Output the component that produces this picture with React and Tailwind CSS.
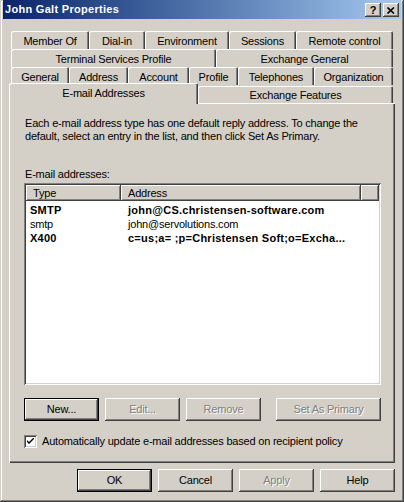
import React from "react";

const raised =
  "shadow-[inset_-1px_-1px_#404040,inset_1px_1px_#ffffff,inset_-2px_-2px_#808080,inset_2px_2px_#d4d0c8]";
const tabEdge =
  "shadow-[inset_1px_1px_#ffffff,inset_-1px_0_#404040,inset_-2px_0_#808080] rounded-t-[2px]";

function Tab({ w, label, className = "" }) {
  return (
    <div
      className={`h-[18px] flex items-center justify-center bg-[#d4d0c8] ${tabEdge} ${className}`}
      style={{ width: w }}
    >
      <span className="leading-none pt-[2px]">{label}</span>
    </div>
  );
}

function Button({ label, w = 75, disabled, isDefault }) {
  return (
    <div
      className={`h-[23px] flex items-center justify-center bg-[#d4d0c8] ${
        isDefault ? "border border-black" : ""
      }`}
      style={{ width: w }}
    >
      <div className={`w-full h-full flex items-center justify-center ${raised}`}>
        <span
          className={
            disabled ? "text-[#808080] [text-shadow:1px_1px_0_#ffffff]" : "text-black"
          }
        >
          {label}
        </span>
      </div>
    </div>
  );
}

export default function App() {
  const rows = [
    { type: "SMTP", addr: "john@CS.christensen-software.com", bold: true },
    { type: "smtp", addr: "john@servolutions.com", bold: false },
    { type: "X400", addr: "c=us;a= ;p=Christensen Soft;o=Excha...", bold: true },
  ];

  return (
    <div className="w-[404px] h-[502px] bg-[#d4d0c8] text-[11px] tracking-[-0.2px] text-black font-['Liberation_Sans',Arial,sans-serif] shadow-[inset_-1px_-1px_#404040,inset_1px_1px_#d4d0c8,inset_-2px_-2px_#808080,inset_2px_2px_#ffffff] overflow-hidden flex flex-col">
      {/* title bar */}
      <div className="mx-[3px] h-[19px] bg-gradient-to-r from-[#0a246a] to-[#a6caf0] flex items-center justify-between pl-[2px] pr-[2px]">
        <span className="text-white font-bold text-[11px] tracking-[0.3px] leading-none">John Galt Properties</span>
        <div className="flex gap-[2px] pt-[1px]">
          <div className={`w-[16px] h-[14px] bg-[#d4d0c8] flex items-center justify-center ${raised}`}>
            <span className="font-bold text-[11px] leading-none">?</span>
          </div>
          <div className={`w-[16px] h-[14px] bg-[#d4d0c8] flex items-center justify-center ${raised}`}>
            <svg width="8" height="7" viewBox="0 0 8 7">
              <path d="M0.5 0.5 L7 6.5 M7 0.5 L0.5 6.5" stroke="#000" strokeWidth="1.6" />
            </svg>
          </div>
        </div>
      </div>

      {/* tabs */}
      <div className="mt-[12px] ml-[11px] flex">
        <Tab w={78} label="Member Of" />
        <Tab w={56} label="Dial-in" />
        <Tab w={84} label="Environment" />
        <Tab w={67} label="Sessions" />
        <Tab w={97} label="Remote control" />
      </div>
      <div className="ml-[11px] flex">
        <Tab w={205} label="Terminal Services Profile" />
        <Tab w={177} label="Exchange General" />
      </div>
      <div className="ml-[11px] flex">
        <Tab w={58} label="General" />
        <Tab w={59} label="Address" />
        <Tab w={61} label="Account" />
        <Tab w={49} label="Profile" />
        <Tab w={76} label="Telephones" />
        <Tab w={79} label="Organization" />
      </div>
      <div className="ml-[9px] h-[18px] flex items-end">
        <div
          className={`relative z-10 w-[189px] h-[21px] mb-[-1px] flex items-center justify-center bg-[#d4d0c8] ${tabEdge}`}
        >
          <span>E-mail Addresses</span>
        </div>
        <Tab w={195} label="Exchange Features" className="!h-[17px]" />
      </div>

      {/* panel */}
      <div className="ml-[9px] w-[386px] h-[360px] bg-[#d4d0c8] shadow-[inset_1px_1px_#ffffff,inset_-1px_-1px_#404040,inset_-2px_-2px_#808080] pl-[15px] pt-[14px] flex flex-col">
        <p className="leading-[13px] pl-[1px]">
          Each e-mail address type has one default reply address. To change the
          <br />
          default, select an entry in the list, and then click Set As Primary.
        </p>
        <p className="mt-[25px] leading-[13px] pl-[1px]">E-mail addresses:</p>

        <div className="mt-[2px] w-[357px] h-[202px] bg-white shadow-[inset_1px_1px_#808080,inset_-1px_-1px_#ffffff,inset_2px_2px_#404040,inset_-2px_-2px_#d4d0c8] p-[2px] flex flex-col">
          <div className="flex h-[16px] bg-[#d4d0c8]">
            <div className={`w-[95px] h-full flex items-center pl-[7px] ${raised}`}>Type</div>
            <div className={`w-[240px] h-full flex items-center pl-[7px] ${raised}`}>Address</div>
            <div className={`flex-1 h-full ${raised}`} />
          </div>
          <div className="pt-[2px]">
            {rows.map((r) => (
              <div
                key={r.type}
                className={`flex h-[14px] items-center ${r.bold ? "font-bold tracking-[0.25px]" : ""}`}
              >
                <div className="w-[95px] pl-[4px]">{r.type}</div>
                <div className="pl-[7px] whitespace-nowrap">{r.addr}</div>
              </div>
            ))}
          </div>
        </div>

        <div className="mt-[13px] flex">
          <Button label="New..." isDefault />
          <div className="ml-[6px]">
            <Button label="Edit..." disabled />
          </div>
          <div className="ml-[6px]">
            <Button label="Remove" disabled />
          </div>
          <div className="ml-[15px]">
            <Button label="Set As Primary" w={105} disabled />
          </div>
        </div>

        <div className="mt-[14px] flex items-center h-[13px]">
          <div className="w-[13px] h-[13px] bg-white shadow-[inset_1px_1px_#808080,inset_-1px_-1px_#ffffff,inset_2px_2px_#404040,inset_-2px_-2px_#d4d0c8] flex items-center justify-center">
            <svg width="7" height="7" viewBox="0 0 7 7">
              <path d="M0 2 L0 4 L2 6 L7 1 L7 -1 L2 4 Z" fill="#000" />
            </svg>
          </div>
          <span className="ml-[5px]">Automatically update e-mail addresses based on recipient policy</span>
        </div>
      </div>

      {/* bottom buttons */}
      <div className="mt-[6px] ml-[77px] flex gap-[6px]">
        <Button label="OK" isDefault />
        <Button label="Cancel" />
        <Button label="Apply" disabled />
        <Button label="Help" />
      </div>
    </div>
  );
}
